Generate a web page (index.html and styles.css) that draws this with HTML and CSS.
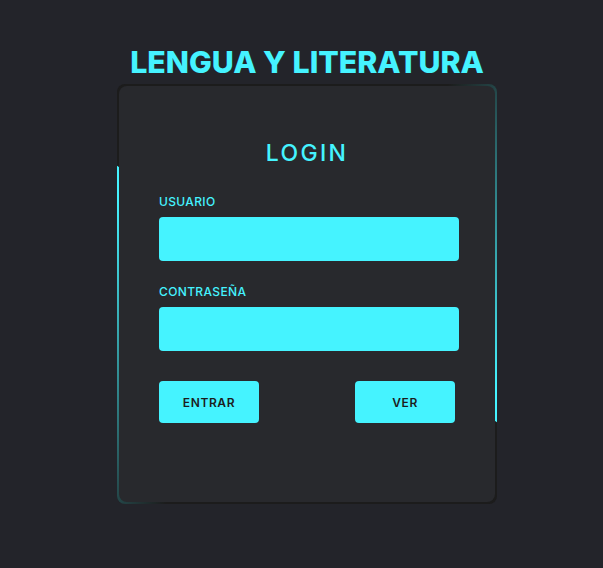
FILE: index.html
```html
<!DOCTYPE html>
<html lang="es">
<head>
<meta charset="utf-8">
<title>Lengua y Literatura</title>
<link rel="stylesheet" href="styles.css">
</head>
<body>
<main class="page">
  <h1 class="title">LENGUA Y LITERATURA</h1>
  <div class="box">
    <form class="form">
      <h2 class="form-title">LOGIN</h2>
      <label class="field">
        <span class="label">USUARIO</span>
        <input class="input" type="text">
      </label>
      <label class="field">
        <span class="label">CONTRASEÑA</span>
        <input class="input" type="password">
      </label>
      <div class="actions">
        <button class="btn" type="button">ENTRAR</button>
        <button class="btn" type="button">VER</button>
      </div>
    </form>
  </div>
</main>
</body>
</html>
```
FILE: styles.css
```css
* { box-sizing: border-box; }
html, body {
  margin: 0;
  padding: 0;
  background: #23242a;
  font-family: Inter, "Noto Sans", sans-serif;
}
.page {
  min-height: 568px;
  display: flex;
  flex-direction: column;
  align-items: center;
  padding: 40px 0 0 11px;
}
.title {
  margin: 0;
  color: #45f3ff;
  font-size: 30.3px;
  font-weight: 800;
  line-height: 44px;
  letter-spacing: 0;
}
.box {
  position: relative;
  width: 380px;
  height: 420px;
  background: #1c1c1c;
  border-radius: 8px;
  overflow: hidden;
  padding: 2px;
}
.box::before,
.box::after {
  content: "";
  position: absolute;
  top: -50%;
  left: -50%;
  width: 380px;
  height: 420px;
  background: linear-gradient(0deg, transparent, #45f3ff, #45f3ff);
  transform-origin: bottom right;
  transform: rotate(124deg);
}
.box::after {
  transform: rotate(304deg);
}
.form {
  position: relative;
  z-index: 1;
  height: 100%;
  background: #28292d;
  border-radius: 8px;
  padding: 52px 40px 0;
  display: flex;
  flex-direction: column;
}
.form-title {
  margin: 0 0 26px;
  text-align: center;
  color: #45f3ff;
  font-size: 23px;
  font-weight: 500;
  letter-spacing: 0.1em;
  line-height: 30px;
}
.field {
  display: flex;
  flex-direction: column;
  margin-bottom: 23px;
}
.label {
  color: #45f3ff;
  font-size: 12px;
  font-weight: 500;
  letter-spacing: 0.03em;
  line-height: 16px;
  margin-bottom: 7px;
}
.input {
  width: 300px;
  height: 44px;
  border: none;
  outline: none;
  border-radius: 4px;
  background: #45f3ff;
  padding: 0 10px;
}
.actions {
  display: flex;
  justify-content: space-between;
  margin-top: 7px;
}
.btn {
  width: 100px;
  height: 42px;
  border: none;
  border-radius: 4px;
  background: #45f3ff;
  color: #1c1c1c;
  font-family: Inter, "Noto Sans", sans-serif;
  font-size: 12px;
  font-weight: 600;
  letter-spacing: 0.05em;
  padding: 0;
}
```
